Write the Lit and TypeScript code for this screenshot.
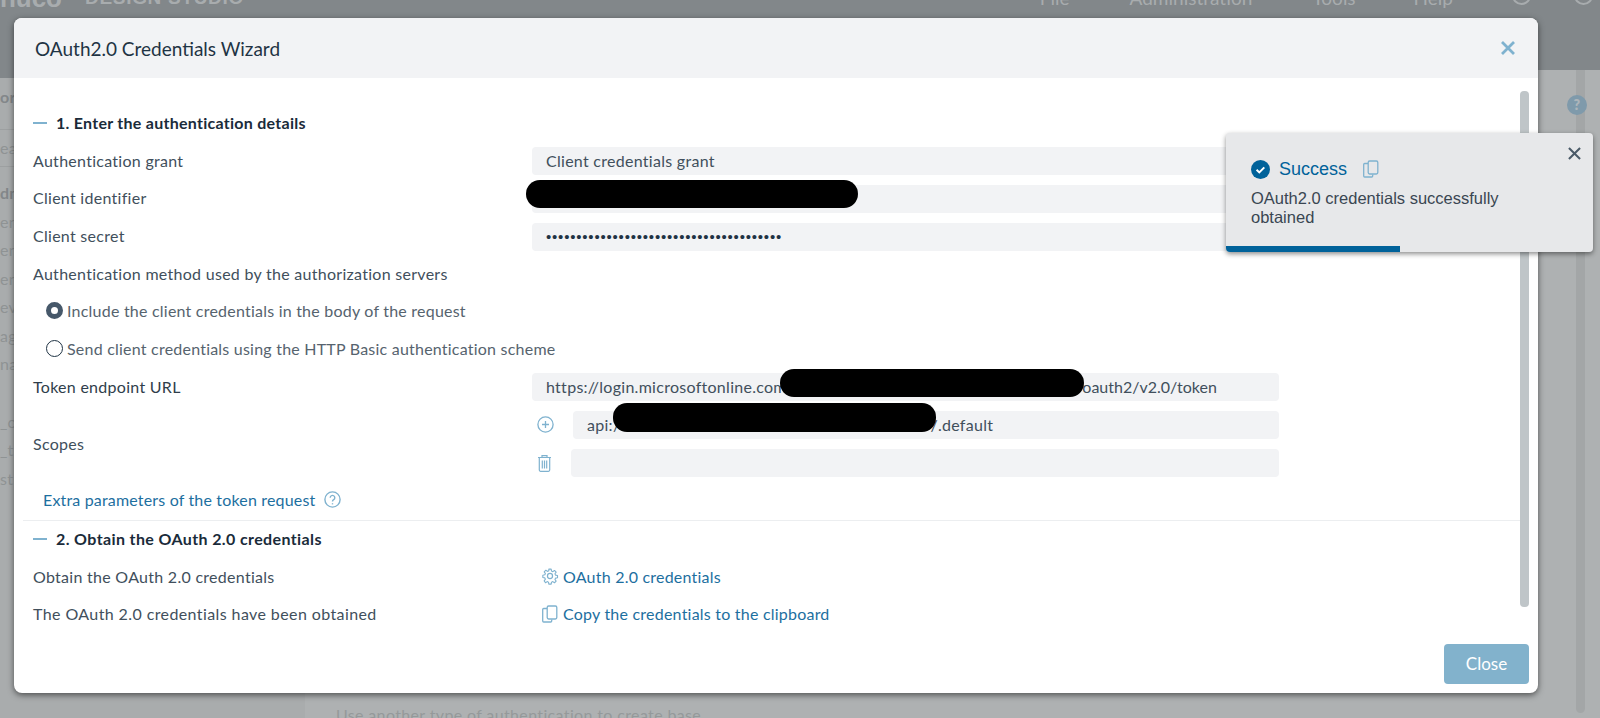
import { LitElement, html, css, svg } from "lit";
import { customElement } from "lit/decorators.js";

const copyIcon = (size: number) => svg`<svg class="ic" width=${size} height=${size} viewBox="0 0 18 18" fill="none" stroke="currentColor" stroke-width="1.3"><path d="M6 3.5H2.7a1 1 0 0 0-1 1V16a1 1 0 0 0 1 1h7a1 1 0 0 0 1-1v-1.5"/><rect x="6.2" y="1" width="9.6" height="13" rx="1.4"/></svg>`;
const gearIcon = svg`<svg class="ic" width="18" height="18" viewBox="0 0 24 24" fill="none" stroke="currentColor" stroke-width="1.6" stroke-linejoin="round"><circle cx="12" cy="12" r="3.4"/><path d="M10.3 2h3.4l.5 2.9 1.9.8 2.4-1.7 2.4 2.4-1.7 2.4.8 1.9 2.9.5v3.4l-2.9.5-.8 1.9 1.7 2.4-2.4 2.4-2.4-1.7-1.9.8-.5 2.9h-3.4l-.5-2.9-1.9-.8-2.4 1.7L3.6 19l1.7-2.4-.8-1.9-2.9-.5v-3.4l2.9-.5.8-1.9L3.6 6l2.4-2.4 2.4 1.7 1.9-.8z" transform="translate(12 12) scale(.92) translate(-12 -12)"/></svg>`;
const plusIcon = svg`<svg class="ic" width="17" height="17" viewBox="0 0 17 17" fill="none" stroke="currentColor" stroke-width="1.3"><circle cx="8.5" cy="8.5" r="7.6"/><path d="M8.5 5v7M5 8.5h7"/></svg>`;
const trashIcon = svg`<svg class="ic" width="15" height="18" viewBox="0 0 15 18" fill="none" stroke="currentColor" stroke-width="1.2"><path d="M1 3.5h13M5 3.5V1.6h5v1.9M2.3 3.5v12.6a1.2 1.2 0 0 0 1.2 1.2h8a1.2 1.2 0 0 0 1.2-1.2V3.5M5.3 6.5v8M7.5 6.5v8M9.7 6.5v8"/></svg>`;
const helpIcon = svg`<svg class="ic" width="17" height="17" viewBox="0 0 17 17" fill="none" stroke="currentColor" stroke-width="1.4"><circle cx="8.5" cy="8.5" r="7.6"/><path d="M6.2 6.7a2.3 2.3 0 1 1 3.5 2c-.8.5-1.2.9-1.2 1.8"/><path d="M8.5 12.2v1.2"/></svg>`;
const closeIcon = (size: number, w: number) => svg`<svg class="ic" width=${size} height=${size} viewBox="0 0 14 14" fill="none" stroke="currentColor" stroke-width=${w}><path d="M1 1l12 12M13 1L1 13"/></svg>`;

@customElement("app-root")
export class AppRoot extends LitElement {
  static styles = css`
    :host { display: block; position: relative; width: 1600px; height: 718px; overflow: hidden; background: #aeb1b2; font-family: Lato, "Open Sans", sans-serif; font-size: 16px; letter-spacing: .28px; color: #414f5c; }
    .ic { display: block; flex: none; }

    .top { height: 70px; background: #82878a; display: flex; color: #a8acae; overflow: hidden; letter-spacing: 0; }
    .logo { margin-top: -13px; display: flex; height: 22px; font: bold 19px/22px "Liberation Sans", sans-serif; white-space: nowrap; }
    .logo-mark { width: 62px; display: flex; justify-content: flex-end; font-size: 26px; margin-right: 23px; }
    .logo-name { letter-spacing: .7px; }
    .menu { margin-left: auto; margin-top: -13px; display: flex; height: 22px; font-size: 19px; line-height: 22px; padding-right: 7px; }
    .menu span { white-space: nowrap; }
    .menu .m1 { margin-right: 60px; }
    .menu .m2 { margin-right: 60px; }
    .menu .m3 { margin-right: 58px; }
    .menu .m4 { margin-right: 59px; }
    .ring { width: 19px; height: 19px; margin-top: -1px; border: 2px solid #a8acae; border-radius: 50%; box-sizing: border-box; }
    .ring.r1 { margin-right: 43px; }

    .under { display: flex; height: 648px; }
    .side { width: 305px; flex: none; background: #a9acad; color: #8f9394; }
    .side-cap { height: 8px; background: #82878a; }
    .side-row { height: 28.5px; line-height: 28.5px; white-space: nowrap; }
    .side-title { margin-top: 5px; height: 28px; line-height: 28px; font-weight: 700; color: #83878a; }
    .side-search { margin-top: 18px; height: 36px; line-height: 36px; border-top: 1px solid #9da0a1; border-bottom: 1px solid #9da0a1; }
    .side-bold { margin-top: 12px; font-weight: 700; color: #83878a; }
    .side-gap { margin-top: 29px; }
    .main { flex: 1; display: flex; justify-content: flex-end; padding-left: 31px; }
    .main-text { flex: 1; align-self: flex-end; color: #95999a; line-height: 18px; margin-bottom: -6px; letter-spacing: .36px; }
    .rail { width: 9px; height: 643px; flex: none; margin-right: 15px; background: #a3a6a7; border-radius: 0 0 5px 5px; }
    .qmark { position: absolute; left: 1567px; top: 95px; width: 20px; height: 20px; border-radius: 50%; background: #7f9aab; color: #adb5ba; font: 800 14px/20px Lato, sans-serif; text-align: center; }

    .modal { position: absolute; left: 14px; top: 18px; width: 1524px; height: 675px; background: #fff; border-radius: 8px; box-shadow: 0 2px 6px rgba(0,0,0,.55); display: flex; flex-direction: column; overflow: hidden; }
    .m-head { height: 60px; flex: none; background: #f2f3f5; display: flex; align-items: center; justify-content: space-between; padding: 0 23px 0 21px; }
    .m-title { font-size: 19px; letter-spacing: 0; color: #1f3344; }
    .x { color: #7fb2cf; }
    .m-main { flex: 1; display: flex; min-height: 0; }
    .content { flex: 1; padding-top: 26px; }
    .sec { padding-left: 19px; }
    .sec-head { display: flex; align-items: center; height: 37.6px; gap: 9px; font-weight: 700; letter-spacing: .27px; color: #1a2b3a; }
    .sec2 .sec-head { letter-spacing: .38px; }
    .dash { width: 14px; height: 2px; background: #7fb2cf; }
    .row { display: grid; grid-template-columns: 499px 747px; align-items: center; height: 37.6px; }
    .input { display: flex; height: 28px; line-height: 28px; background: #f2f3f5; border-radius: 4px; padding-left: 14px; color: #414f5c; white-space: nowrap; overflow: hidden; }
    .row > .input { margin-top: 2px; }
    .token > .input { margin-top: 0; }
    .dots { color: #1f3344; font-family: "Liberation Sans", sans-serif; font-size: 15px; letter-spacing: .8px; }
    .gap-url { width: 289px; flex: none; }
    .gap-api { width: 310px; flex: none; }
    .tail { letter-spacing: 0; }
    .radio { display: flex; align-items: center; gap: 4px; height: 37.6px; padding-left: 13px; color: #56636e; letter-spacing: .22px; }
    .dot { width: 17px; height: 17px; box-sizing: border-box; border: 1.5px solid #1f3344; border-radius: 50%; flex: none; }
    .dot.on { border: 5px solid #46586a; }
    .token { margin-top: 1px; color: #2f3e4b; }
    .scopes { margin-top: 5px; color: #414f5c; align-items: center; height: 65px; }
    .scope-list { display: flex; flex-direction: column; gap: 10px; }
    .scope { display: flex; align-items: center; color: #7fb2cf; }
    .scope .slot { width: 41px; padding-left: 5px; box-sizing: border-box; flex: none; }
    .scope .input { flex: 1; }
    .scope.alt .slot { width: 39px; }
    .extra { display: flex; align-items: center; gap: 9px; margin: 15px 0 0 10px; height: 18px; color: #1d6f9f; letter-spacing: .17px; }
    .extra .ic { color: #7fb2cf; }
    .divider { height: 1px; background: #eceef0; margin: 11px 0 0 9px; }
    .sec2 { margin-top: -1px; }
    .wide { letter-spacing: .4px; }
    .link { display: flex; align-items: center; gap: 4px; color: #1d6f9f; letter-spacing: .22px; }
    .link .ic { color: #7fb2cf; }
    .link .ico { width: 31px; display: flex; justify-content: flex-end; flex: none; margin-left: -4px; }
    .bar { width: 9px; margin: 13px 9px 37px 0; flex: none; background: #bfc5c8; border-radius: 4px; }
    .m-foot { flex: none; display: flex; justify-content: flex-end; padding: 0 9px 9px 0; }
    .btn { width: 85px; height: 40px; line-height: 40px; background: #82b2cc; color: #fff; text-align: center; border-radius: 4px; font-size: 17px; letter-spacing: 0; }

    .blob { position: absolute; background: #000; border-radius: 14px; height: 28px; }
    .b1 { left: 526px; top: 180px; width: 332px; }
    .b2 { left: 780px; top: 369px; width: 304px; }
    .b3 { left: 613px; top: 403px; width: 323px; height: 29px; }

    .toast { position: absolute; left: 1226px; top: 133px; width: 367px; height: 119px; box-sizing: border-box; padding: 25px 26px 0 25px; background: #e7e8ea; border-radius: 4px; box-shadow: 0 2px 5px rgba(0,0,0,.45); overflow: hidden; letter-spacing: 0; }
    .t-head { display: flex; align-items: center; height: 22px; color: #00629a; font: 18px/22px "Liberation Sans", Arial, sans-serif; }
    .t-check { margin-right: 9px; }
    .t-copy { margin-left: 15px; color: #7fb2cf; }
    .t-text { margin-top: 9px; font: 16.5px/19px "Liberation Sans", Arial, sans-serif; color: #3a4652; width: 280px; }
    .t-x { position: absolute; right: 12px; top: 14px; color: #4a5a68; }
    .t-bar { position: absolute; left: 0; bottom: 0; width: 174px; height: 6px; background: #00629a; }
  `;

  render() {
    return html`
      <div class="top">
        <div class="logo"><span class="logo-mark">nuco</span><span class="logo-name">DESIGN STUDIO</span></div>
        <div class="menu">
          <span class="m1">File</span><span class="m2">Administration</span><span class="m3">Tools</span><span class="m4">Help</span>
          <div class="ring r1"></div><div class="ring"></div>
        </div>
      </div>
      <div class="under">
        <div class="side">
          <div class="side-cap"></div>
          <div class="side-title">or</div>
          <div class="side-search">ear</div>
          <div class="side-row side-bold">dm</div>
          <div class="side-row">en</div><div class="side-row">en</div><div class="side-row">en</div>
          <div class="side-row">ev</div><div class="side-row">ag</div><div class="side-row">na</div>
          <div class="side-row side-gap">_c</div><div class="side-row">_t</div><div class="side-row">st</div>
        </div>
        <div class="main">
          <div class="main-text">Use another type of authentication to create base</div>
          <div class="rail"></div>
        </div>
      </div>
      <div class="qmark">?</div>

      <div class="modal">
        <div class="m-head">
          <div class="m-title">OAuth2.0 Credentials Wizard</div>
          <div class="x">${closeIcon(14, 2.8)}</div>
        </div>
        <div class="m-main">
          <div class="content">
            <div class="sec">
              <div class="sec-head"><div class="dash"></div>1. Enter the authentication details</div>
              <div class="row"><div>Authentication grant</div><div class="input">Client credentials grant</div></div>
              <div class="row"><div>Client identifier</div><div class="input"></div></div>
              <div class="row"><div>Client secret</div><div class="input dots">•••••••••••••••••••••••••••••••••••••••</div></div>
              <div class="row"><div>Authentication method used by the authorization servers</div></div>
              <div class="radio"><div class="dot on"></div>Include the client credentials in the body of the request</div>
              <div class="radio"><div class="dot"></div>Send client credentials using the HTTP Basic authentication scheme</div>
              <div class="row token"><div>Token endpoint URL</div><div class="input"><span>https://login.microsoftonline.com</span><span class="gap-url"></span><span class="tail">/oauth2/v2.0/token</span></div></div>
              <div class="row scopes">
                <div>Scopes</div>
                <div class="scope-list">
                  <div class="scope"><div class="slot">${plusIcon}</div><div class="input"><span>api:/</span><span class="gap-api"></span><span>/.default</span></div></div>
                  <div class="scope alt"><div class="slot">${trashIcon}</div><div class="input"></div></div>
                </div>
              </div>
              <div class="extra">Extra parameters of the token request ${helpIcon}</div>
            </div>
            <div class="divider"></div>
            <div class="sec sec2">
              <div class="sec-head"><div class="dash"></div>2. Obtain the OAuth 2.0 credentials</div>
              <div class="row"><div>Obtain the OAuth 2.0 credentials</div><div class="link"><span class="ico">${gearIcon}</span>OAuth 2.0 credentials</div></div>
              <div class="row"><div class="wide">The OAuth 2.0 credentials have been obtained</div><div class="link"><span class="ico">${copyIcon(18)}</span>Copy the credentials to the clipboard</div></div>
            </div>
          </div>
          <div class="bar"></div>
        </div>
        <div class="m-foot"><div class="btn">Close</div></div>
      </div>

      <div class="blob b1"></div><div class="blob b2"></div><div class="blob b3"></div>

      <div class="toast">
        <div class="t-head">
          <svg class="ic t-check" width="19" height="19" viewBox="0 0 19 19"><circle cx="9.5" cy="9.5" r="9.5" fill="#00629a"/><path d="M5.6 9.8l2.7 2.6 5-5" fill="none" stroke="#fff" stroke-width="2"/></svg>
          Success
          <span class="t-copy">${copyIcon(18)}</span>
        </div>
        <div class="t-text">OAuth2.0 credentials successfully obtained</div>
        <div class="t-x">${closeIcon(13, 2.2)}</div>
        <div class="t-bar"></div>
      </div>
    `;
  }
}
